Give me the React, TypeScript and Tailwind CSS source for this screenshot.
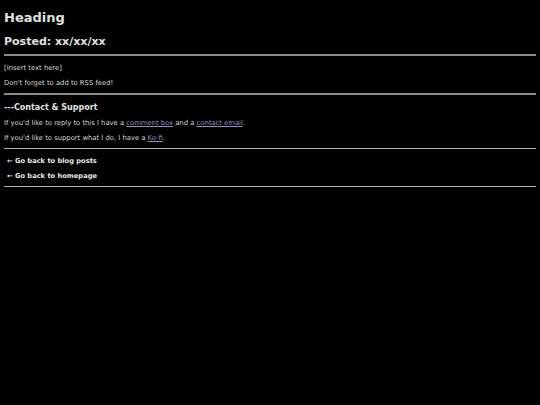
export default function App() {
  return (
    <div className="min-h-[405px] bg-black px-[4px] pt-[10px] text-[#d8d8d8] font-['DejaVu_Sans',sans-serif]">
      <h1 className="text-[13px] font-bold leading-[16px] text-[#e0e0e0]">Heading</h1>
      <h2 className="mt-[9px] text-[11px] font-bold leading-[14px] text-[#e0e0e0]">Posted: xx/xx/xx</h2>
      <hr className="mt-[5px] border-t-2 border-[#8a8a8a]" />

      <p className="mt-[8px] text-[6.8px] leading-[9px]">[Insert text here]</p>
      <p className="mt-[6px] text-[6.8px] leading-[9px]">Don't forget to add to RSS feed!</p>
      <hr className="mt-[5px] border-t-2 border-[#8a8a8a]" />

      <h3 className="mt-[7px] text-[8px] font-bold leading-[11px] text-[#e0e0e0]">---Contact &amp; Support</h3>
      <p className="mt-[6px] text-[6.8px] leading-[9px]">
        If you'd like to reply to this I have a{' '}
        <a href="#" className="text-[#9c8bc2] underline">comment box</a> and a{' '}
        <a href="#" className="text-[#9c8bc2] underline">contact email</a>.
      </p>
      <p className="mt-[6px] text-[6.8px] leading-[9px]">
        If you'd like to support what I do, I have a{' '}
        <a href="#" className="text-[#9c8bc2] underline">Ko-fi</a>.
      </p>
      <hr className="mt-[5px] border-t border-[#b0b0b0]" />

      <div className="flex flex-col gap-[6px] pl-[3px] pt-[8px] text-[6.7px] font-bold leading-[9px] text-[#e8e8e8]">
        <a href="#">← Go back to blog posts</a>
        <a href="#">← Go back to homepage</a>
      </div>
      <hr className="mt-[5px] border-t border-[#b0b0b0]" />
    </div>
  );
}
